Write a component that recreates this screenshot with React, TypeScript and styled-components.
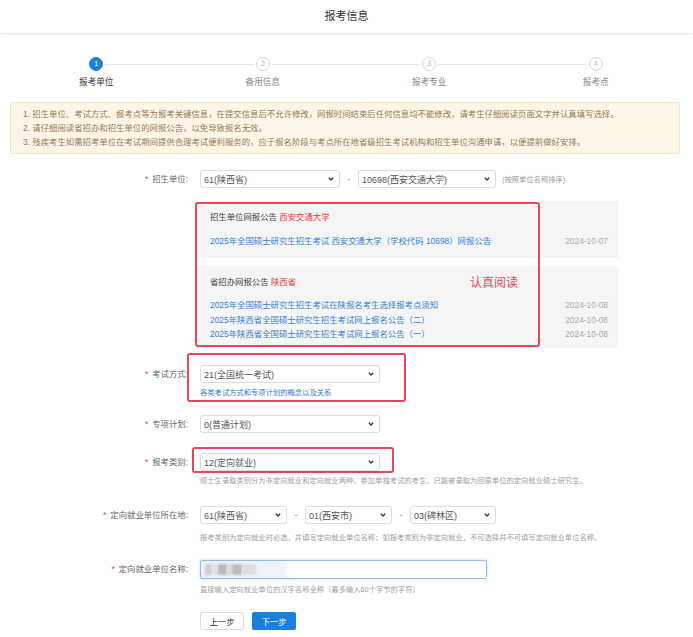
import React from "react";
import styled, { createGlobalStyle } from "styled-components";

const GlobalStyle = createGlobalStyle`
  html, body {
    margin: 0;
    padding: 0;
    background: #fff;
  }
  body {
    font-family: "Liberation Sans", "Noto Sans CJK SC", sans-serif;
    color: #333;
  }
  * {
    box-sizing: border-box;
  }
`;

const Page = styled.div`
  width: 693px;
  height: 637px;
  overflow: hidden;
`;

const Header = styled.div`
  height: 34px;
  line-height: 33px;
  text-align: center;
  font-size: 11px;
  color: #333;
  border-bottom: 1px solid #e9e9e9;
  box-shadow: 0 2px 4px rgba(0, 0, 0, 0.03);
`;

const Content = styled.div`
  padding: 0 13px 0 10px;
`;

const Stepper = styled.div`
  display: grid;
  grid-template-columns: repeat(4, 1fr);
  margin: 0 1px 0 3px;
  padding-top: 23px;
`;

const Step = styled.div<{ $last?: boolean }>`
  position: relative;
  display: flex;
  flex-direction: column;
  align-items: center;

  &::after {
    content: "";
    display: ${(p) => (p.$last ? "none" : "block")};
    position: absolute;
    top: 7px;
    left: calc(50% + 9px);
    width: calc(100% - 18px);
    height: 1px;
    background: #e8e8e8;
  }
`;

const StepDot = styled.div<{ $active?: boolean }>`
  width: 14px;
  height: 14px;
  border-radius: 50%;
  font-size: 8px;
  line-height: 12px;
  text-align: center;
  border: 1px solid ${(p) => (p.$active ? "#1b7fdc" : "#d8d8d8")};
  background: ${(p) => (p.$active ? "#1b7fdc" : "#fff")};
  color: ${(p) => (p.$active ? "#fff" : "#bbb")};
`;

const StepLabel = styled.div<{ $active?: boolean }>`
  margin-top: 5px;
  font-size: 8.6px;
  line-height: 12px;
  color: ${(p) => (p.$active ? "#333" : "#888")};
`;

const Notice = styled.div`
  margin-top: 14px;
  padding: 4px 12px;
  background: #fdf6e7;
  border: 1px solid #f5e2bf;
  border-radius: 3px;
  font-size: 8.4px;
  line-height: 14px;
  color: #917a5c;
`;

const Field = styled.div<{ $mt: number }>`
  position: relative;
  display: grid;
  grid-template-columns: 178px 1fr;
  column-gap: 12px;
  margin-top: ${(p) => p.$mt}px;
`;

const Label = styled.div`
  text-align: right;
  font-size: 8.4px;
  line-height: 18px;
  color: #666;
  white-space: nowrap;
`;

const Star = styled.span`
  color: #e8383d;
  margin-right: 4px;
`;

const Controls = styled.div`
  display: flex;
  align-items: center;
`;

const Select = styled.div<{ $w: number }>`
  width: ${(p) => p.$w}px;
  height: 18px;
  border: 1px solid #dcdcdc;
  border-radius: 3px;
  display: flex;
  align-items: center;
  justify-content: space-between;
  padding: 0 5px 0 3px;
  font-size: 9px;
  color: #555;
  background: #fff;
  white-space: nowrap;
`;

const Dash = styled.span`
  width: 18px;
  text-align: center;
  color: #888;
  font-size: 9px;
`;

const SideNote = styled.span`
  margin-left: 6px;
  font-size: 7.3px;
  color: #999;
`;

const Hint = styled.div<{ $mt: number; $link?: boolean }>`
  grid-column: 2;
  margin-top: ${(p) => p.$mt}px;
  font-size: 7.3px;
  line-height: 12px;
  color: ${(p) => (p.$link ? "#2f7bd0" : "#a0a0a0")};
  white-space: nowrap;
`;

const Panel = styled.div`
  position: relative;
  margin: 13px 0 0 187px;
  width: 421px;
  display: flex;
  flex-direction: column;
  gap: 8px;
`;

const Block = styled.div<{ $h: number }>`
  height: ${(p) => p.$h}px;
  background: #f5f5f5;
  padding: 10px 10px 0 13px;
`;

const BlockTitle = styled.div`
  font-size: 8.4px;
  line-height: 12px;
  color: #444;
`;

const Red = styled.span`
  color: #e8383d;
`;

const NoticeList = styled.div<{ $mt: number }>`
  margin-top: ${(p) => p.$mt}px;
`;

const NoticeRow = styled.div`
  display: flex;
  justify-content: space-between;
  font-size: 8.4px;
  line-height: 14.5px;
`;

const NoticeLink = styled.span`
  color: #3580d2;
`;

const NoticeDate = styled.span`
  color: #aaa;
`;

const Mark = styled.div<{ $l: number; $t: number; $w: number; $h: number }>`
  position: absolute;
  left: ${(p) => p.$l}px;
  top: ${(p) => p.$t}px;
  width: ${(p) => p.$w}px;
  height: ${(p) => p.$h}px;
  border: 2px solid #e8465a;
  border-radius: 3px;
  pointer-events: none;
`;

const MarkText = styled.div`
  position: absolute;
  left: 273px;
  top: 74px;
  font-size: 12px;
  line-height: 16px;
  color: #e8465a;
`;

const TextInput = styled.div`
  width: 287px;
  height: 19px;
  border: 1px solid #93bde6;
  border-radius: 2px;
  box-shadow: 0 0 3px rgba(80, 150, 220, 0.35);
  background: linear-gradient(to right, #edf3fb 0, #edf3fb 84px, #fff 88px);
  display: flex;
  align-items: center;
  padding-left: 4px;
  overflow: hidden;
`;

const Smudge = styled.span<{ $w: number; $c: string }>`
  display: inline-block;
  width: ${(p) => p.$w}px;
  height: 11px;
  background: ${(p) => p.$c};
  filter: blur(1.3px);
`;

const Buttons = styled.div`
  display: flex;
  gap: 8px;
  margin: 16px 0 0 190px;
`;

const Button = styled.button<{ $primary?: boolean }>`
  width: 44px;
  height: 18px;
  padding: 0;
  font-family: inherit;
  font-size: 8.4px;
  border-radius: 2px;
  border: 1px solid ${(p) => (p.$primary ? "#1b7fdc" : "#dcdcdc")};
  background: ${(p) => (p.$primary ? "#1b7fdc" : "#fff")};
  color: ${(p) => (p.$primary ? "#fff" : "#333")};
`;

const Chevron = () => (
  <svg width="6" height="4" viewBox="0 0 6 4">
    <path d="M0.8 0.8 L3 3 L5.2 0.8" fill="none" stroke="#333" strokeWidth="1.3" />
  </svg>
);

function Dropdown({ value, width }: { value: string; width: number }) {
  return (
    <Select $w={width}>
      <span>{value}</span>
      <Chevron />
    </Select>
  );
}

const steps = ["报考单位", "备用信息", "报考专业", "报考点"];

const provinceNotices = [
  "2025年全国硕士研究生招生考试在陕报名考生选择报考点须知",
  "2025年陕西省全国硕士研究生招生考试网上报名公告（二）",
  "2025年陕西省全国硕士研究生招生考试网上报名公告（一）",
];

const smudges: [number, string][] = [
  [7, "#cfcfcf"],
  [6, "#e2e2e2"],
  [9, "#b9b9b9"],
  [5, "#dadada"],
  [10, "#bcbcbc"],
  [14, "#dedede"],
];

export default function App() {
  return (
    <Page>
      <GlobalStyle />
      <Header>报考信息</Header>
      <Content>
        <Stepper>
          {steps.map((s, i) => (
            <Step key={s} $last={i === steps.length - 1}>
              <StepDot $active={i === 0}>{i + 1}</StepDot>
              <StepLabel $active={i === 0}>{s}</StepLabel>
            </Step>
          ))}
        </Stepper>

        <Notice>
          <div>1. 招生单位、考试方式、报考点等为报考关键信息，在提交信息后不允许修改，网报时间结束后任何信息均不能修改，请考生仔细阅读页面文字并认真填写选择。</div>
          <div>2. 请仔细阅读省招办和招生单位的网报公告，以免导致报名无效。</div>
          <div>3. 残疾考生如需招考单位在考试期间提供合理考试便利服务的，应于报名阶段与考点所在地省级招生考试机构和招生单位沟通申请，以便提前做好安排。</div>
        </Notice>

        <Field $mt={16}>
          <Label>
            <Star>*</Star>招生单位:
          </Label>
          <Controls>
            <Dropdown value="61(陕西省)" width={140} />
            <Dash>-</Dash>
            <Dropdown value="10698(西安交通大学)" width={138} />
            <SideNote>(按照单位名称排序)</SideNote>
          </Controls>
        </Field>

        <Panel>
          <Block $h={57}>
            <BlockTitle>
              招生单位网报公告 <Red>西安交通大学</Red>
            </BlockTitle>
            <NoticeList $mt={11}>
              <NoticeRow>
                <NoticeLink>2025年全国硕士研究生招生考试 西安交通大学（学校代码 10698）网报公告</NoticeLink>
                <NoticeDate>2024-10-07</NoticeDate>
              </NoticeRow>
            </NoticeList>
          </Block>
          <Block $h={82}>
            <BlockTitle>
              省招办网报公告 <Red>陕西省</Red>
            </BlockTitle>
            <NoticeList $mt={10}>
              {provinceNotices.map((n) => (
                <NoticeRow key={n}>
                  <NoticeLink>{n}</NoticeLink>
                  <NoticeDate>2024-10-08</NoticeDate>
                </NoticeRow>
              ))}
            </NoticeList>
          </Block>
          <Mark $l={-2} $t={1} $w={345} $h={145} />
          <MarkText>认真阅读</MarkText>
        </Panel>

        <Field $mt={17}>
          <Label>
            <Star>*</Star>考试方式:
          </Label>
          <Controls>
            <Dropdown value="21(全国统一考试)" width={180} />
          </Controls>
          <Hint $mt={4} $link>
            各类考试方式和专项计划的概念以及关系
          </Hint>
          <Mark $l={177} $t={-12} $w={219} $h={49} />
        </Field>

        <Field $mt={16}>
          <Label>
            <Star>*</Star>专项计划:
          </Label>
          <Controls>
            <Dropdown value="0(普通计划)" width={180} />
          </Controls>
        </Field>

        <Field $mt={20}>
          <Label>
            <Star>*</Star>报考类别:
          </Label>
          <Controls>
            <Dropdown value="12(定向就业)" width={180} />
          </Controls>
          <Hint $mt={4}>
            硕士生录取类别分为非定向就业和定向就业两种。参加单独考试的考生，只能被录取为回原单位的定向就业硕士研究生。
          </Hint>
          <Mark $l={182} $t={-6} $w={202} $h={26} />
        </Field>

        <Field $mt={19}>
          <Label>
            <Star>*</Star>定向就业单位所在地:
          </Label>
          <Controls>
            <Dropdown value="61(陕西省)" width={87} />
            <Dash>-</Dash>
            <Dropdown value="01(西安市)" width={87} />
            <Dash>-</Dash>
            <Dropdown value="03(碑林区)" width={86} />
          </Controls>
          <Hint $mt={8}>
            报考类别为定向就业时必选，并填写定向就业单位名称；如报考类别为非定向就业，不可选择并不可填写定向就业单位名称。
          </Hint>
        </Field>

        <Field $mt={16}>
          <Label>
            <Star>*</Star>定向就业单位名称:
          </Label>
          <Controls>
            <TextInput>
              {smudges.map(([w, c], i) => (
                <Smudge key={i} $w={w} $c={c} />
              ))}
            </TextInput>
          </Controls>
          <Hint $mt={5}>直接输入定向就业单位的汉字名称全称（最多输入60个字节的字符）</Hint>
        </Field>

        <Buttons>
          <Button>上一步</Button>
          <Button $primary>下一步</Button>
        </Buttons>
      </Content>
    </Page>
  );
}
